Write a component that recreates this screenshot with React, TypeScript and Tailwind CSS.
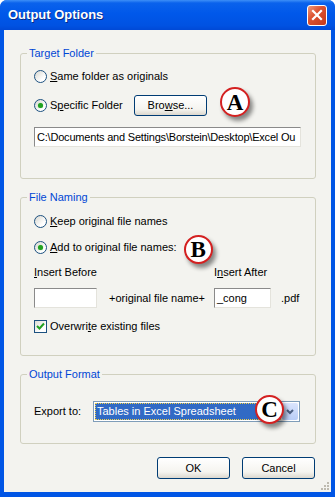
import React from 'react';

const Radio = ({ checked }: { checked?: boolean }) => (
  <span className="w-[13px] h-[13px] shrink-0 rounded-full border border-[#1c5180] bg-[linear-gradient(135deg,#d6d6cf,#ffffff_70%)] flex items-center justify-center">
    {checked && <span className="w-[5px] h-[5px] rounded-full bg-[#21a121] shadow-[0_0_1px_#5fd35f]" />}
  </span>
);

const Badge = ({ letter, size }: { letter: string; size: string }) => (
  <span
    className={`${size} shrink-0 rounded-full bg-white border-[2px] border-[#d42121] shadow-[3px_4px_4px_rgba(0,0,0,0.45)] flex items-center justify-center font-['Liberation_Serif',serif] font-bold text-[23px] leading-none text-black`}
  >
    {letter}
  </span>
);

const XpButton = ({ children, className }: { children: React.ReactNode; className: string }) => (
  <button
    type="button"
    className={`${className} rounded-[3px] border border-[#003c74] bg-[linear-gradient(to_bottom,#ffffff,#f5f4ef_70%,#dcd8ce)] text-[11px] text-black leading-none flex items-center justify-center`}
  >
    {children}
  </button>
);

const Group = ({ title, className, children }: { title: string; className: string; children: React.ReactNode }) => (
  <div className={`relative border border-[#d0d0bf] rounded-[3px] ${className}`}>
    <span className="absolute -top-[8px] left-[6px] px-[2px] bg-[#f3f3ef] text-[#0046d5] leading-[14px]">{title}</span>
    {children}
  </div>
);

const sunken = 'bg-white border border-t-[#8a8a8a] border-l-[#8a8a8a] border-b-[#e4e3dc] border-r-[#e4e3dc]';

export default function App() {
  return (
    <div className="w-[335px] h-[497px] flex flex-col bg-[#0055e5] rounded-t-[7px] overflow-hidden font-['Liberation_Sans',Arial,sans-serif] text-[11px] text-black select-none">
      {/* title bar */}
      <div className="h-[30px] shrink-0 flex items-center bg-[linear-gradient(to_bottom,#3d8ff7_0%,#0a62ec_10%,#0058ea_45%,#0052e2_85%,#0049d6_100%)]">
        <span className="ml-[8px] text-white font-bold text-[13px] [text-shadow:1px_1px_0_#0a2a86]">Output Options</span>
        <span className="ml-auto mr-[8px] w-[20px] h-[21px] rounded-[3px] border border-white bg-[linear-gradient(135deg,#ee9b7c,#dd5331_40%,#c5391a)] flex items-center justify-center">
          <svg width="12" height="12" viewBox="0 0 12 12">
            <path d="M2 2 L10 10 M10 2 L2 10" stroke="white" strokeWidth="2.2" strokeLinecap="square" />
          </svg>
        </span>
      </div>

      {/* client */}
      <div className="relative flex-1 mx-[4px] mb-[5px] bg-[#f3f3ef] pt-[23px] pl-[16px] pr-[15px] flex flex-col">
        <Group title="Target Folder" className="pt-[16px] pl-[13px] pr-[14px] pb-[31px]">
          <div className="flex items-center h-[13px] gap-[3px] leading-[13px]">
            <Radio />
            <span><span className="underline">S</span>ame folder as originals</span>
          </div>
          <div className="flex items-center h-[21px] mt-[12px] leading-[13px]">
            <Radio checked />
            <span className="ml-[3px] w-[84px]">S<span className="underline">p</span>ecific Folder</span>
            <XpButton className="w-[73px] h-[21px]">
              <span>Bro<span className="underline">w</span>se...</span>
            </XpButton>
            <span className="ml-[13px] self-start -mt-[8px]">
              <Badge letter="A" size="w-[30px] h-[30px]" />
            </span>
          </div>
          <div className={`mt-[11px] h-[20px] ${sunken} overflow-hidden whitespace-nowrap pl-[2px] leading-[18px] tracking-[-0.2px]`}>
            C:\Documents and Settings\Borstein\Desktop\Excel Ou
          </div>
        </Group>

        <Group title="File Naming" className="mt-[18px] pt-[17px] pl-[13px] pr-[14px] pb-[22px]">
          <div className="flex items-center h-[13px] gap-[3px] leading-[13px]">
            <Radio />
            <span><span className="underline">K</span>eep original file names</span>
          </div>
          <div className="flex items-center h-[13px] mt-[13px] leading-[13px]">
            <Radio checked />
            <span className="ml-[3px]"><span className="underline">A</span>dd to original file names:</span>
            <span className="ml-[7px] self-start -mt-[6px]">
              <Badge letter="B" size="w-[29px] h-[29px]" />
            </span>
          </div>
          <div className="flex items-center h-[13px] mt-[12px] leading-[13px]">
            <span className="w-[180px]"><span className="underline">I</span>nsert Before</span>
            <span>I<span className="underline">n</span>sert After</span>
          </div>
          <div className="flex items-center h-[20px] mt-[9px]">
            <div className={`w-[63px] h-[20px] ${sunken}`} />
            <span className="w-[117px] pl-[12px]">+original file name+</span>
            <div className={`w-[57px] h-[20px] ${sunken} pl-[2px] leading-[18px]`}>_cong</div>
            <span className="pl-[10px]">.pdf</span>
          </div>
          <div className="flex items-center h-[13px] mt-[12px] gap-[3px] leading-[13px]">
            <span className="w-[13px] h-[13px] shrink-0 border border-[#1c5180] bg-[linear-gradient(135deg,#dcdcd5,#ffffff_70%)] flex items-center justify-center">
              <svg width="9" height="9" viewBox="0 0 9 9">
                <path d="M1 4 L3.5 6.5 L8 1.5" fill="none" stroke="#21a121" strokeWidth="2" />
              </svg>
            </span>
            <span>Overwri<span className="underline">t</span>e existing files</span>
          </div>
        </Group>

        <Group title="Output Format" className="mt-[18px] pt-[26px] pl-[13px] pr-[14px] pb-[21px]">
          <div className="flex items-center h-[21px]">
            <span className="w-[59px] leading-[13px]">Export to:</span>
            <div className="relative w-[207px] h-[21px] border border-[#7f9db9] bg-white flex p-[1px]">
              <div className="flex-1 bg-[#316ac5] border border-dotted border-[#f2d14a] text-white leading-[15px] pl-[1px] whitespace-nowrap overflow-hidden">
                Tables in Excel Spreadsheet
              </div>
              <div className="w-[16px] ml-[1px] rounded-[2px] bg-[linear-gradient(to_bottom,#dbe5fd,#b9cdf7)] flex items-center justify-center">
                <svg width="8" height="6" viewBox="0 0 8 6">
                  <path d="M1 1 L4 4 L7 1" fill="none" stroke="#4d6185" strokeWidth="2" />
                </svg>
              </div>
              <span className="absolute left-[161px] -top-[7px]">
                <Badge letter="C" size="w-[29px] h-[29px]" />
              </span>
            </div>
          </div>
        </Group>

        <div className="mt-[13px] flex justify-end gap-[12px] mr-[1px]">
          <XpButton className="w-[73px] h-[22px]">OK</XpButton>
          <XpButton className="w-[73px] h-[22px]">Cancel</XpButton>
        </div>

        <svg className="absolute right-[1px] bottom-[1px]" width="10" height="10" viewBox="0 0 10 10">
          <g fill="#bdbab0">
            <rect x="7" y="1" width="2" height="2" />
            <rect x="4" y="4" width="2" height="2" />
            <rect x="7" y="4" width="2" height="2" />
            <rect x="1" y="7" width="2" height="2" />
            <rect x="4" y="7" width="2" height="2" />
            <rect x="7" y="7" width="2" height="2" />
          </g>
        </svg>
      </div>
    </div>
  );
}
